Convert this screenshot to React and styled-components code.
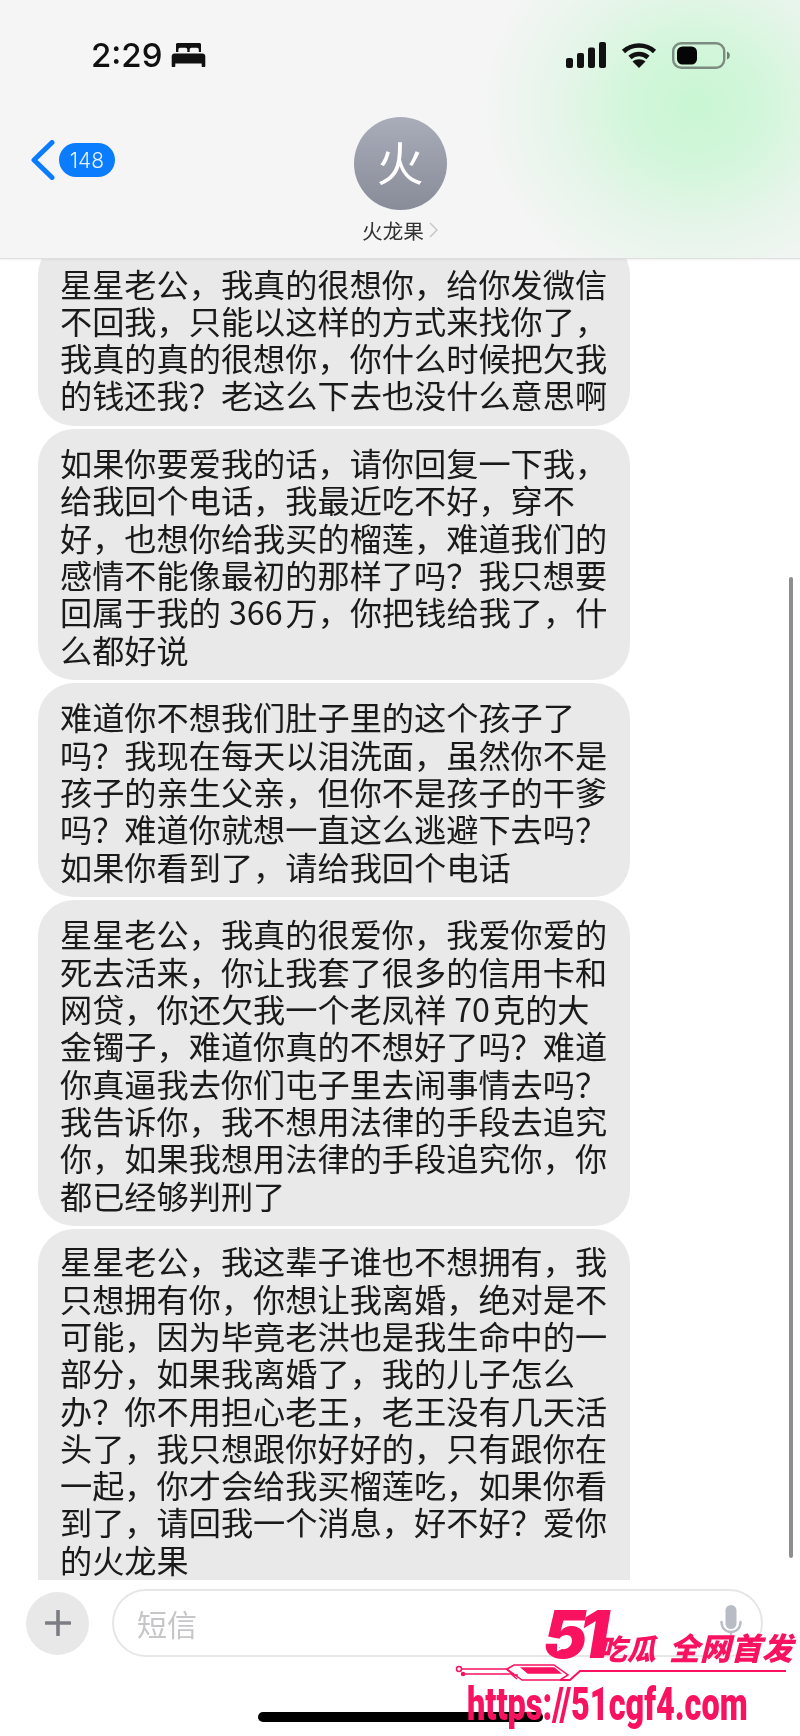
import React from "react";
import styled, { createGlobalStyle } from "styled-components";

const Global = createGlobalStyle`
  html, body { margin: 0; padding: 0; background: #fff; }
  * { box-sizing: border-box; }
`;
const CJK = `"Noto Sans CJK SC", "Noto Sans", sans-serif`;

const Page = styled.div`
  position: relative;
  width: 800px;
  height: 1736px;
  overflow: hidden;
  background: #fff;
  display: flex;
  flex-direction: column;
  font-family: ${CJK};
  filter: blur(0.45px);
`;
const Header = styled.header`
  height: 259px;
  flex: none;
  position: relative;
  z-index: 1;
  background:
    radial-gradient(ellipse 215px 195px at 695px 105px, #c9f6d3 0%, #d2f6da 30%, rgba(224,245,229,.75) 62%, rgba(245,245,245,0) 100%),
    #f5f5f5;
  border-bottom: 1px solid #dedede;
  box-shadow: 0 1px 2px rgba(0,0,0,.06);
  padding-top: 40px;
`;
const StatusBar = styled.div`
  height: 30px;
  display: flex;
  align-items: center;
  justify-content: space-between;
  padding: 0 70px 0 91px;
`;
const TimeGroup = styled.div`
  display: flex;
  align-items: center;
  gap: 9px;
`;
const Time = styled.span`
  font-family: Inter, "Liberation Sans", sans-serif;
  font-size: 33px;
  font-weight: 500;
  line-height: 30px;
  color: #111;
`;
const StatusIcons = styled.div`
  display: flex;
  align-items: center;
  gap: 15px;
`;
const Nav = styled.div`
  margin-top: 47px;
  display: grid;
  grid-template-columns: 1fr auto 1fr;
`;
const BackGroup = styled.div`
  display: flex;
  align-items: center;
  gap: 4px;
  padding: 23px 0 0 31px;
  align-self: start;
`;
const Badge = styled.span`
  width: 56px;
  height: 34px;
  border-radius: 17px;
  background: #0a7cff;
  color: #e6f2ff;
  font-family: Inter, sans-serif;
  font-size: 21px;
  font-weight: 300;
  display: flex;
  align-items: center;
  justify-content: center;
`;
const Contact = styled.div`
  display: flex;
  flex-direction: column;
  align-items: center;
`;
const Avatar = styled.div`
  width: 93px;
  height: 93px;
  border-radius: 50%;
  background: linear-gradient(#a9acb9, #888b98);
  color: #fff;
  font-size: 47px;
  font-weight: 400;
  line-height: 88px;
  text-align: center;
`;
const NameRow = styled.div`
  margin-top: 5px;
  display: flex;
  align-items: center;
  gap: 5px;
  font-size: 20.6px;
  line-height: 30px;
  color: #333;
`;
const Messages = styled.main`
  height: 1321px;
  flex: none;
  overflow: hidden;
  padding-left: 38px;
  display: flex;
  flex-direction: column;
  gap: 2.5px;
`;
const Bubble = styled.div`
  flex: none;
  width: 592px;
  padding: ${p => (p.$first ? "25.5px" : p.$last ? "13.5px" : "15.5px")} 18px ${p => (p.$last ? "60px" : "12.5px")} 22px;
  margin-top: ${p => (p.$first ? "-20px" : "0")};
  border-radius: 36px;
  background: #e9e9e9;
  color: #1a1a1a;
  font-size: 32.2px;
  line-height: 37.3px;
`;
const Line = styled.div`
  white-space: nowrap;
`;
const Num = styled.span`
  margin: 0 3px 0 8px;
`;
const Composer = styled.div`
  margin-top: 9px;
  display: flex;
  align-items: center;
  gap: 23px;
  padding: 0 37px 0 26px;
`;
const PlusButton = styled.div`
  width: 63px;
  height: 63px;
  flex: none;
  border-radius: 50%;
  background: #e8e8e8;
  display: flex;
  align-items: center;
  justify-content: center;
`;
const Input = styled.div`
  flex: 1;
  height: 68px;
  border: 2px solid #e6e6e6;
  border-radius: 34px;
  display: flex;
  align-items: center;
  justify-content: space-between;
  padding: 0 19px 0 23px;
`;
const Placeholder = styled.span`
  font-size: 30px;
  color: #c6c6c8;
  line-height: 40px;
`;
const HomeBar = styled.div`
  margin: 55px auto 0;
  width: 285px;
  height: 10px;
  border-radius: 5px;
  background: #000;
`;
const Scrollbar = styled.div`
  position: absolute;
  right: 7px;
  top: 577px;
  width: 4px;
  height: 981px;
  border-radius: 2px;
  background: #8e8e8e;
`;
const Watermark = styled.div`
  position: absolute;
  left: 450px;
  top: 1608px;
  width: 345px;
  color: #f8125f;
  z-index: 2;
`;
const BrandRow = styled.div`
  display: flex;
  align-items: flex-end;
  height: 56px;
  padding-left: 93px;
  font-style: italic;
  font-weight: 900;
  white-space: nowrap;
`;
const BrandNum = styled.span`
  position: relative;
  font-family: Inter, sans-serif;
  font-size: 66px;
  line-height: 60px;
  letter-spacing: -8px;
`;
const BrandA = styled.span`
  font-size: 29px;
  line-height: 34px;
  margin-left: -3px;
`;
const BrandB = styled.span`
  font-size: 31px;
  line-height: 34px;
  margin-left: 13px;
`;
const CircuitSvg = styled.svg`
  display: block;
`;
const Url = styled.div`
  font-family: Roboto, sans-serif;
  font-weight: 900;
  font-size: 47px;
  line-height: 50px;
  white-space: nowrap;
  margin: -3px 0 0 17px;
  transform: scaleX(.69);
  transform-origin: left center;
`;

const messages = [
  ["星星老公，我真的很想你，给你发微信", "不回我，只能以这样的方式来找你了，", "我真的真的很想你，你什么时候把欠我", "的钱还我？老这么下去也没什么意思啊"],
  ["如果你要爱我的话，请你回复一下我，", "给我回个电话，我最近吃不好，穿不", "好，也想你给我买的榴莲，难道我们的", "感情不能像最初的那样了吗？我只想要", "回属于我的366万，你把钱给我了，什", "么都好说"],
  ["难道你不想我们肚子里的这个孩子了", "吗？我现在每天以泪洗面，虽然你不是", "孩子的亲生父亲，但你不是孩子的干爹", "吗？难道你就想一直这么逃避下去吗？", "如果你看到了，请给我回个电话"],
  ["星星老公，我真的很爱你，我爱你爱的", "死去活来，你让我套了很多的信用卡和", "网贷，你还欠我一个老凤祥70克的大", "金镯子，难道你真的不想好了吗？难道", "你真逼我去你们屯子里去闹事情去吗？", "我告诉你，我不想用法律的手段去追究", "你，如果我想用法律的手段追究你，你", "都已经够判刑了"],
  ["星星老公，我这辈子谁也不想拥有，我", "只想拥有你，你想让我离婚，绝对是不", "可能，因为毕竟老洪也是我生命中的一", "部分，如果我离婚了，我的儿子怎么", "办？你不用担心老王，老王没有几天活", "头了，我只想跟你好好的，只有跟你在", "一起，你才会给我买榴莲吃，如果你看", "到了，请回我一个消息，好不好？爱你", "的火龙果"],
];

const BedIcon = () => (
  <svg width="35" height="24" viewBox="0 0 35 24">
    <path fill="#111" d="M5 1.500C5 .7 5.700 0 6.500 0h22C29.300 0 30 .7 30 1.500V9h-2.200V6.500c0-1-.8-1.800-1.800-1.800h-5.500c-1 0-1.800.8-1.800 1.800V9h-2.400V6.500c0-1-.8-1.800-1.800-1.800H9.200c-1 0-1.800.8-1.800 1.800V9H5z" />
    <path fill="#111" d="M3.500 10.500h28c1.500 0 2.800 1.200 2.800 2.800V23c0 .6-.4 1-1 1h-1.600c-.6 0-1-.4-1-1v-2.600H4.300V23c0 .6-.4 1-1 1H1.700c-.6 0-1-.4-1-1v-9.700c0-1.600 1.200-2.800 2.800-2.800z" />
  </svg>
);
const SignalIcon = () => (
  <svg width="40" height="26" viewBox="0 0 40 26">
    <rect x="0" y="16" width="7" height="10" rx="2" fill="#111" />
    <rect x="11" y="11" width="7" height="15" rx="2" fill="#111" />
    <rect x="22" y="5.500" width="7" height="20.500" rx="2" fill="#111" />
    <rect x="33" y="0" width="7" height="26" rx="2" fill="#111" />
  </svg>
);
const WifiIcon = () => (
  <svg width="36" height="26" viewBox="0 0 36 26" fill="none">
    <path d="M2.500 9.500C11 1.500 25 1.500 33.500 9.500" stroke="#111" strokeWidth="4.600" />
    <path d="M9 15.500c5-4.600 13-4.600 18 0" stroke="#111" strokeWidth="4.600" />
    <path fill="#111" d="M18 26l-6.500-6.500c3.600-3 9.400-3 13 0z" />
  </svg>
);
const BatteryIcon = () => (
  <svg width="58" height="27" viewBox="0 0 58 27" fill="none">
    <rect x="1.200" y="1.200" width="51" height="24.600" rx="8" stroke="#7d8c80" strokeWidth="2.400" />
    <rect x="5" y="4.500" width="20" height="18" rx="5.500" fill="#050505" />
    <path d="M55 9.500c2 .6 2.800 2.300 2.800 4s-.8 3.400-2.800 4z" fill="#6f7d72" />
  </svg>
);
const BackChevron = () => (
  <svg width="24" height="40" viewBox="0 0 24 40" fill="none">
    <path d="M21 2.500 3 20l18 17.500" stroke="#0a7cff" strokeWidth="5" strokeLinecap="round" strokeLinejoin="round" />
  </svg>
);
const SmallChevron = () => (
  <svg width="9" height="16" viewBox="0 0 9 16" fill="none">
    <path d="M1 1l7 7-7 7" stroke="#c4c4c4" strokeWidth="1.400" />
  </svg>
);
const PlusIcon = () => (
  <svg width="26" height="26" viewBox="0 0 26 26" fill="none">
    <path d="M13 1v24M1 13h24" stroke="#7c7c84" strokeWidth="3.600" strokeLinecap="round" />
  </svg>
);
const MicIcon = () => (
  <svg width="22" height="36" viewBox="0 0 22 36" fill="none">
    <rect x="5.500" y="0" width="11" height="24" rx="5.500" fill="#b8bcc4" />
    <path d="M1.500 17c0 6 4 10 9.500 10s9.500-4 9.500-10M11 27v8" stroke="#b8bcc4" strokeWidth="2.400" strokeLinecap="round" />
  </svg>
);
const PlayMark = styled.svg`
  position: absolute;
  left: 13px;
  top: 34px;
`;
const Circuit = () => (
  <CircuitSvg width="345" height="18" viewBox="0 0 345 18" fill="none" stroke="#f8125f" strokeWidth="1.500">
    <circle cx="9" cy="5" r="2.500" />
    <path d="M12 5h44l8 6h4" />
    <circle cx="13" cy="10" r="1.500" fill="#f8125f" />
    <path d="M15 10h46l6 5" />
    <path d="M57 5l7-4h40l14 10-8 5H72z" />
    <path d="M72 4h32l6 5H78z" fill="#f8125f" />
    <path d="M110 16h10l10-9h206" strokeWidth="2" />
  </CircuitSvg>
);

const renderLine = text =>
  text.split(/(\d+)/).map((part, i) => (/^\d+$/.test(part) ? <Num key={i}>{part}</Num> : part));

export default function App() {
  return (
    <Page>
      <Global />
      <Header>
        <StatusBar>
          <TimeGroup>
            <Time>2:29</Time>
            <BedIcon />
          </TimeGroup>
          <StatusIcons>
            <SignalIcon />
            <WifiIcon />
            <BatteryIcon />
          </StatusIcons>
        </StatusBar>
        <Nav>
          <BackGroup>
            <BackChevron />
            <Badge>148</Badge>
          </BackGroup>
          <Contact>
            <Avatar>火</Avatar>
            <NameRow>
              火龙果
              <SmallChevron />
            </NameRow>
          </Contact>
        </Nav>
      </Header>
      <Messages>
        {messages.map((lines, i) => (
          <Bubble key={i} $first={i === 0} $last={i === messages.length - 1}>
            {lines.map((l, j) => (
              <Line key={j}>{renderLine(l)}</Line>
            ))}
          </Bubble>
        ))}
      </Messages>
      <Composer>
        <PlusButton>
          <PlusIcon />
        </PlusButton>
        <Input>
          <Placeholder>短信</Placeholder>
          <MicIcon />
        </Input>
      </Composer>
      <HomeBar />
      <Scrollbar />
      <Watermark>
        <BrandRow>
          <BrandNum>
            51
            <PlayMark width="14" height="14" viewBox="0 0 14 14">
              <path d="M2 2l10 5-10 5z" fill="none" stroke="#fff" strokeWidth="2" />
            </PlayMark>
          </BrandNum>
          <BrandA>吃瓜</BrandA>
          <BrandB>全网首发</BrandB>
        </BrandRow>
        <Circuit />
        <Url>https://51cgf4.com</Url>
      </Watermark>
    </Page>
  );
}
